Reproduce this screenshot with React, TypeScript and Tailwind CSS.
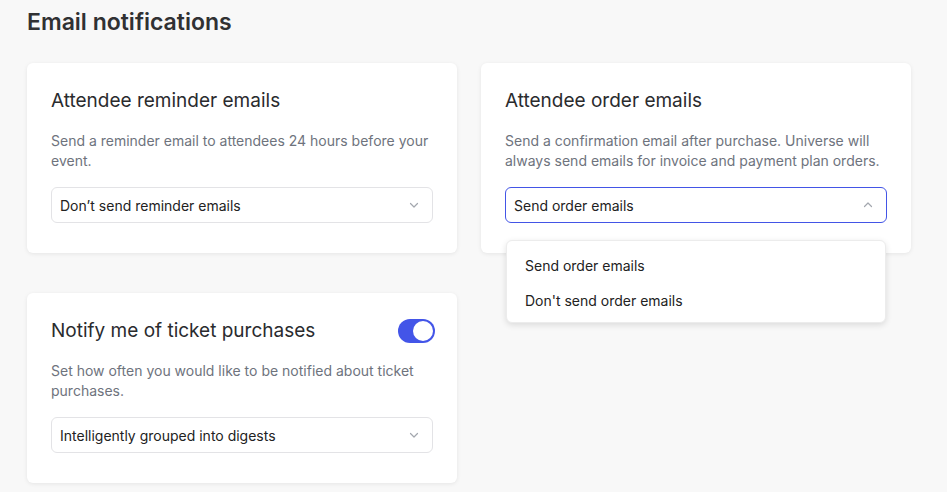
import React from "react";

function Chevron({ up = false }: { up?: boolean }) {
  return (
    <svg width="12" height="12" viewBox="0 0 12 12" fill="none" className="text-[#a3a7ae]">
      <path
        d={up ? "M2.5 7.5L6 4L9.5 7.5" : "M2.5 4.5L6 8L9.5 4.5"}
        stroke="currentColor"
        strokeWidth="1.2"
        strokeLinecap="round"
        strokeLinejoin="round"
      />
    </svg>
  );
}

function Select({ value, open = false }: { value: string; open?: boolean }) {
  return (
    <div
      className={
        "flex h-[36px] items-center justify-between rounded-[6px] border bg-white pl-[8px] pr-[12px] text-[14px] text-[#222] " +
        (open ? "border-[#4355e6]" : "border-[#e3e3e6]")
      }
    >
      <span>{value}</span>
      <Chevron up={open} />
    </div>
  );
}

function Card({
  title,
  desc,
  children,
  toggle = false,
}: {
  title: string;
  desc: string;
  children: React.ReactNode;
  toggle?: boolean;
}) {
  return (
    <div className="relative w-[430px] h-[190px] rounded-[6px] bg-white px-6 pt-[24px] shadow-[0_1px_4px_rgba(0,0,0,0.08)]">
      <div className="flex h-[28px] items-center justify-between">
        <h2 className="text-[19px] font-normal leading-[28px] text-[#2a2b2e]">{title}</h2>
        {toggle && (
          <div className="mr-[-2px] flex h-[24px] w-[37px] items-center justify-end rounded-full bg-[#4355e8] pr-[2px]">
            <div className="h-[20px] w-[20px] rounded-full bg-white" />
          </div>
        )}
      </div>
      <p className="mt-[16px] text-[14px] leading-[20px] text-[#6e737d]">{desc}</p>
      <div className="mt-[16px]">{children}</div>
    </div>
  );
}

export default function App() {
  return (
    <div
      className="min-h-[492px] w-[947px] bg-[#f8f8f8] pl-[27px] pt-[6px]"
      style={{ fontFamily: "Inter, 'Noto Sans', sans-serif" }}
    >
      <h1 className="text-[23px] font-semibold leading-[32px] text-[#303133]">Email notifications</h1>
      <div className="mt-[25px] grid grid-cols-[430px_430px] gap-x-[24px] gap-y-[40px]">
        <Card
          title="Attendee reminder emails"
          desc="Send a reminder email to attendees 24 hours before your event."
        >
          <Select value="Don’t send reminder emails" />
        </Card>
        <div className="relative">
          <Card
            title="Attendee order emails"
            desc="Send a confirmation email after purchase. Universe will always send emails for invoice and payment plan orders."
          >
            <Select value="Send order emails" open />
          </Card>
          <div className="absolute left-[25px] top-[177px] z-10 w-[380px] rounded-[6px] border border-[#ececec] bg-white pb-[4px] pt-[7px] shadow-[0_2px_6px_rgba(0,0,0,0.12)]">
            <div className="flex h-[35px] items-center pl-[18px] text-[14px] text-[#222]">Send order emails</div>
            <div className="flex h-[35px] items-center pl-[18px] text-[14px] text-[#222]">Don't send order emails</div>
          </div>
        </div>
        <Card
          title="Notify me of ticket purchases"
          desc="Set how often you would like to be notified about ticket purchases."
          toggle
        >
          <Select value="Intelligently grouped into digests" />
        </Card>
      </div>
    </div>
  );
}
